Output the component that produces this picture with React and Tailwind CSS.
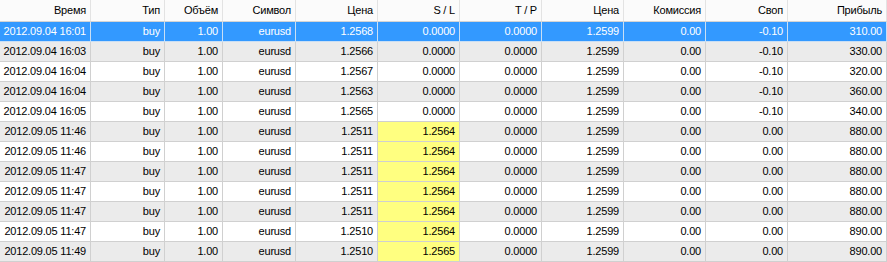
const columns = [
  { title: 'Время', width: 'w-[91px]' },
  { title: 'Тип', width: 'w-[74px]' },
  { title: 'Объём', width: 'w-[58px]' },
  { title: 'Символ', width: 'w-[73px]' },
  { title: 'Цена', width: 'w-[82px]' },
  { title: 'S / L', width: 'w-[82px]' },
  { title: 'T / P', width: 'w-[82px]' },
  { title: 'Цена', width: 'w-[82px]' },
  { title: 'Комиссия', width: 'w-[82px]' },
  { title: 'Своп', width: 'w-[82px]' },
  { title: 'Прибыль', width: 'w-[99px]' },
];

const rows = [
  ['2012.09.04 16:01', '1.2568', '0.0000', '-0.10', '310.00'],
  ['2012.09.04 16:03', '1.2566', '0.0000', '-0.10', '330.00'],
  ['2012.09.04 16:04', '1.2567', '0.0000', '-0.10', '320.00'],
  ['2012.09.04 16:04', '1.2563', '0.0000', '-0.10', '360.00'],
  ['2012.09.04 16:05', '1.2565', '0.0000', '-0.10', '340.00'],
  ['2012.09.05 11:46', '1.2511', '1.2564', '0.00', '880.00'],
  ['2012.09.05 11:46', '1.2511', '1.2564', '0.00', '880.00'],
  ['2012.09.05 11:47', '1.2511', '1.2564', '0.00', '880.00'],
  ['2012.09.05 11:47', '1.2511', '1.2564', '0.00', '880.00'],
  ['2012.09.05 11:47', '1.2511', '1.2564', '0.00', '880.00'],
  ['2012.09.05 11:47', '1.2510', '1.2564', '0.00', '890.00'],
  ['2012.09.05 11:49', '1.2510', '1.2565', '0.00', '890.00'],
];

export default function App() {
  return (
    <div className="w-[887px] h-[262px] overflow-hidden bg-white text-[11px] tracking-[-0.2px] text-black font-['Liberation_Sans',Arial,sans-serif] leading-none">
      {/* Header */}
      <div className="flex h-[22px] bg-[#fbfbfb] border-b border-[#d4d4d4]">
        {columns.map((col, i) => (
          <div
            key={i}
            className={`${col.width} shrink-0 flex items-center justify-end pr-[4px] border-r border-[#e3e3e3]`}
          >
            {col.title}
          </div>
        ))}
      </div>

      {/* Rows */}
      {rows.map((r, idx) => {
        const selected = idx === 0;
        const rowBg = selected ? 'bg-[#3399ff] text-white' : idx % 2 === 1 ? 'bg-[#ebebeb]' : 'bg-white';
        const cells = [r[0], 'buy', '1.00', 'eurusd', r[1], r[2], '0.0000', '1.2599', '0.00', r[3], r[4]];
        return (
          <div key={idx} className={`flex h-[20px] border-b ${selected ? 'border-[#c9dff5]' : 'border-[#d0d0d0]'} ${rowBg}`}>
            {cells.map((c, i) => {
              const yellow = i === 5 && r[2] !== '0.0000';
              return (
                <div
                  key={i}
                  className={`${columns[i].width} shrink-0 flex items-center justify-end pr-[4px] whitespace-nowrap overflow-hidden border-r ${selected ? 'border-[#c9dff5]' : 'border-[#d0d0d0]'} ${yellow ? 'bg-[#ffff80]' : ''}`}
                >
                  {c}
                </div>
              );
            })}
          </div>
        );
      })}
    </div>
  );
}
